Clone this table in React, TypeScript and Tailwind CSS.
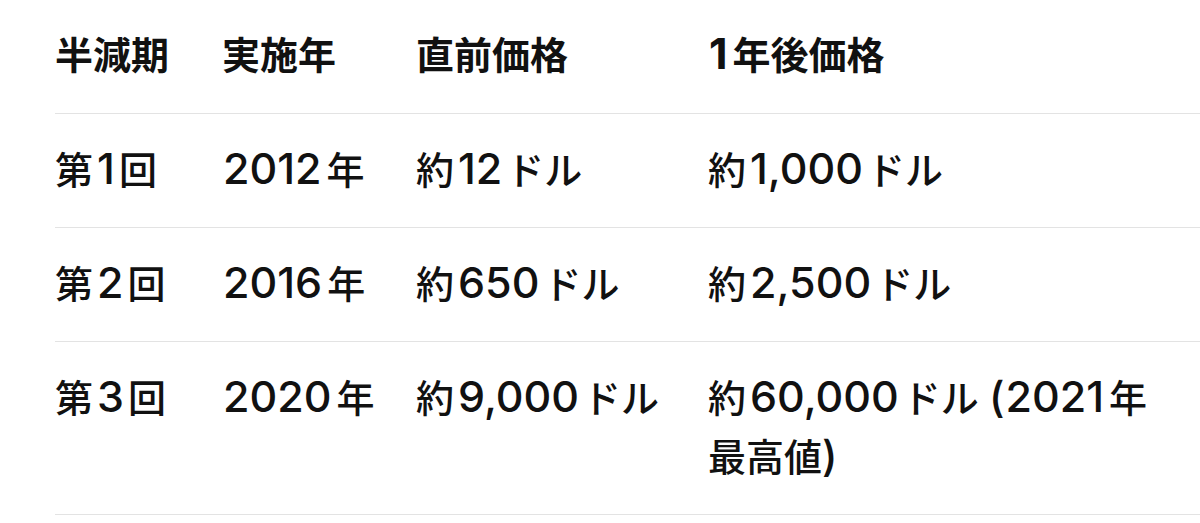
import React from "react";

// latin digits are drawn larger than the kana/kanji in the reference, with a small gap on each side
function N({ children, r = true }: { children: React.ReactNode; r?: boolean }) {
  return (
    <span className={r ? "mx-[4px] text-[43px] leading-none" : "ml-[1px] mr-[5px] text-[43px] leading-none"}>
      {children}
    </span>
  );
}

const rows = [
  { n: "1", year: "2012", before: "12", after: <>約<N>1,000</N>ドル</> },
  { n: "2", year: "2016", before: "650", after: <>約<N>2,500</N>ドル</> },
  {
    n: "3",
    year: "2020",
    before: "9,000",
    after: (
      <>
        約<N>60,000</N>ドル <span className="text-[42px] leading-none">(</span>
        <N r={false}>2021</N>年最高値<span className="text-[42px] leading-none">)</span>
      </>
    ),
  },
];

const cols = "grid grid-cols-[167px_194px_292px_1fr]";

export default function App() {
  return (
    <div
      className="w-[1200px] h-[523px] overflow-hidden bg-white pl-[55px] text-[#111111]"
      style={{ fontFamily: 'Inter, "Noto Sans CJK JP", sans-serif' }}
    >
      {/* Header */}
      <div className={`${cols} border-b border-[#e3e3e3] pt-[26px] pb-[28px] text-[38px] leading-[59px] font-bold`}>
        <div>半減期</div>
        <div>実施年</div>
        <div>直前価格</div>
        <div>
          <N r={false}>1</N>年後価格
        </div>
      </div>

      {/* Body */}
      {rows.map((r) => (
        <div
          key={r.year}
          className={`${cols} border-b border-[#e3e3e3] py-[27px] text-[38px] leading-[59px] font-medium`}
        >
          <div>
            第<N>{r.n}</N>回
          </div>
          <div>
            <N r={false}>{r.year}</N>年
          </div>
          <div>
            約<N>{r.before}</N>ドル
          </div>
          <div className="pr-[40px]">{r.after}</div>
        </div>
      ))}
    </div>
  );
}
